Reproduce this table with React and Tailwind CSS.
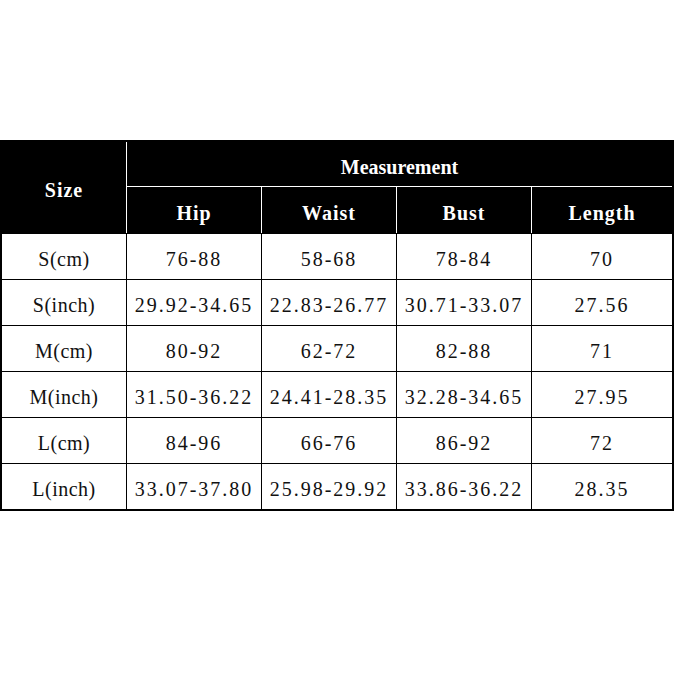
import React from "react";

const cols = ["Hip", "Waist", "Bust", "Length"];

const rows = [
  ["S(cm)", "76-88", "58-68", "78-84", "70"],
  ["S(inch)", "29.92-34.65", "22.83-26.77", "30.71-33.07", "27.56"],
  ["M(cm)", "80-92", "62-72", "82-88", "71"],
  ["M(inch)", "31.50-36.22", "24.41-28.35", "32.28-34.65", "27.95"],
  ["L(cm)", "84-96", "66-76", "86-92", "72"],
  ["L(inch)", "33.07-37.80", "25.98-29.92", "33.86-36.22", "28.35"],
];

const App = () => {
  return (
    <div className="w-[675px] h-[675px] bg-white pt-[140px] font-['Liberation_Serif',serif] text-[20px] leading-none">
      <div className="w-[674px] border-2 border-black">
        {/* Header */}
        <div className="grid grid-cols-[124px_134px_134px_134px_140px] grid-rows-[44px_46px] gap-px bg-white">
          <div className="row-span-2 bg-black text-white font-bold tracking-[1px] flex items-center justify-center pt-[4px]">
            Size
          </div>
          <div className="col-span-4 bg-black text-white font-bold flex items-center justify-center pt-[6px]">
            Measurement
          </div>
          {cols.map((c) => (
            <div
              key={c}
              className="bg-black text-white font-bold tracking-[1px] flex items-center justify-center pt-[6px]"
            >
              {c}
            </div>
          ))}
        </div>

        {/* Body */}
        <div className="grid grid-cols-[124px_134px_134px_134px_140px] auto-rows-[45px] gap-px bg-black border-t border-black">
          {rows.map((r) =>
            r.map((v, i) => (
              <div
                key={r[0] + i}
                className={`bg-white text-[#111] flex items-center justify-center pt-[4px] ${
                  i === 0 ? "tracking-[0.5px]" : "tracking-[2px]"
                }`}
              >
                {v}
              </div>
            ))
          )}
        </div>
      </div>
    </div>
  );
};

export default App;
